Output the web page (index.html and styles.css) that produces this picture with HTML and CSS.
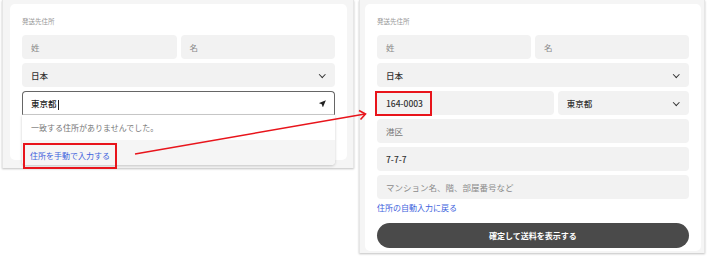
FILE: index.html
```html
<!DOCTYPE html>
<html lang="ja">
<head>
    <meta charset="UTF-8">
    <title>住所入力</title>
    <link rel="stylesheet" href="styles.css">
</head>
<body>

<div class="page">
    <!-- Before: auto-complete search -->
    <div class="shot shot-left">
        <div class="card">
            <div class="label">発送先住所</div>
            <div class="row">
                <div class="field ph">姓</div>
                <div class="field ph">名</div>
            </div>
            <div class="field select">日本<span class="chev"></span></div>
            <div class="search">
                <div class="field active">東京都<span class="caret"></span>
                    <svg class="nav-icon" width="9" height="9" viewBox="0 0 24 24"><path d="M21 3 3 10.5v1l7 2.5 2.5 7h1z" fill="#222"/></svg>
                </div>
                <div class="dropdown">
                    <div class="no-match">一致する住所がありませんでした。</div>
                    <div class="manual"><span class="hl">住所を手動で入力する</span></div>
                </div>
            </div>
        </div>
    </div>

    <!-- After: manual entry -->
    <div class="shot shot-right">
        <div class="card">
            <div class="label">発送先住所</div>
            <div class="row">
                <div class="field ph">姓</div>
                <div class="field ph">名</div>
            </div>
            <div class="field select">日本<span class="chev"></span></div>
            <div class="row">
                <div class="field zip"><span class="hl-zip"></span>164-0003</div>
                <div class="field select pref">東京都<span class="chev"></span></div>
            </div>
            <div class="field ph2">港区</div>
            <div class="field">7-7-7</div>
            <div class="field ph">マンション名、階、部屋番号など</div>
            <a class="back-link">住所の自動入力に戻る</a>
            <button class="submit">確定して送料を表示する</button>
        </div>
    </div>

    <svg class="arrow" width="708" height="258" viewBox="0 0 708 258">
        <line x1="135" y1="154" x2="365" y2="114" stroke="#e8141b" stroke-width="1.6"/>
        <path d="M359 110.5 365.5 114 360.5 119.5" fill="none" stroke="#e8141b" stroke-width="1.6"/>
    </svg>
</div>

</body>
</html>
```

FILE: styles.css
```css
body {
    margin: 0;
    padding: 0;
    background: #fff;
    font-family: "Noto Sans CJK JP", "Noto Sans", sans-serif;
    color: #333;
}

.page {
    position: relative;
    width: 708px;
    height: 258px;
    display: flex;
    align-items: flex-start;
}

/* Screenshot frames */
.shot {
    background: #f5f5f5;
    box-shadow: 0 1px 2px rgba(0, 0, 0, 0.25);
    border-left: 1px solid #e6e6e6;
    border-right: 1px solid #e6e6e6;
    padding-top: 4px;
}

.shot-left {
    margin-left: 2px;
    width: 343px;
    height: 164px;
    padding-left: 7px;
}

.shot-right {
    margin-left: 5px;
    width: 339px;
    height: 249px;
    padding-left: 5px;
}

.card {
    width: 313px;
    background: #fff;
    border-radius: 5px;
    padding: 12px 12px 0 12px;
    display: flex;
    flex-direction: column;
    gap: 4px;
}

.shot-left .card {
    height: 144px;
}

.shot-right .card {
    height: 235px;
    width: 312px;
}

.label {
    font-size: 6.5px;
    color: #999;
    height: 10px;
    line-height: 10px;
    margin-bottom: 5px;
}

.row {
    display: flex;
    gap: 4px;
}

.row .field {
    flex: 1;
}

.field {
    position: relative;
    height: 24px;
    line-height: 24px;
    background: #f2f2f2;
    border-radius: 4px;
    padding: 0 9px;
    font-size: 8.5px;
    font-weight: 500;
    color: #333;
    box-sizing: border-box;
}

.field.ph {
    color: #8a8a8a;
    font-weight: normal;
}

.field.ph2 {
    color: #777;
    font-weight: normal;
}

.row .field.zip {
    flex: 1.4;
}

.chev {
    position: absolute;
    right: 11px;
    top: 9px;
    width: 3.5px;
    height: 3.5px;
    border-right: 1.2px solid #333;
    border-bottom: 1.2px solid #333;
    transform: rotate(45deg);
}

/* Search box with open dropdown */
.search {
    position: relative;
}

.field.active {
    background: #fff;
    border: 1px solid #666;
    border-bottom-color: #ccc;
    border-radius: 4px 4px 0 0;
    line-height: 22px;
    padding-left: 8px;
    color: #222;
}

.caret {
    display: inline-block;
    width: 1px;
    height: 10px;
    background: #222;
    vertical-align: middle;
    margin-left: 1px;
}

.nav-icon {
    position: absolute;
    right: 7px;
    top: 7px;
}

.dropdown {
    position: absolute;
    left: 0;
    right: 0;
    top: 24px;
    background: #fff;
    border-radius: 0 0 4px 4px;
    box-shadow: 0 1px 3px rgba(0, 0, 0, 0.2);
    z-index: 2;
}

.no-match {
    height: 25px;
    line-height: 25px;
    padding-left: 9px;
    font-size: 8px;
    color: #777;
}

.manual {
    height: 25px;
    background: #f5f5f5;
    border-radius: 0 0 4px 4px;
}

.manual .hl {
    display: inline-block;
    height: 26px;
    line-height: 22px;
    padding: 0 5px;
    margin-left: 1px;
    font-size: 8px;
    color: #3d63dd;
    border: 2px solid #e8141b;
    box-sizing: border-box;
}

.hl-zip {
    position: absolute;
    left: -2px;
    top: 0;
    width: 57px;
    height: 25px;
    border: 2px solid #e8141b;
    box-sizing: border-box;
}

.back-link {
    font-size: 8px;
    color: #3d63dd;
    height: 13px;
    line-height: 13px;
    margin-top: -2px;
}

.submit {
    margin-top: 5px;
    height: 25px;
    border: none;
    border-radius: 13px;
    background: #4a4a4a;
    color: #fff;
    font-family: inherit;
    font-size: 8px;
    font-weight: bold;
}

.arrow {
    position: absolute;
    left: 0;
    top: 0;
    pointer-events: none;
    z-index: 5;
}
```
